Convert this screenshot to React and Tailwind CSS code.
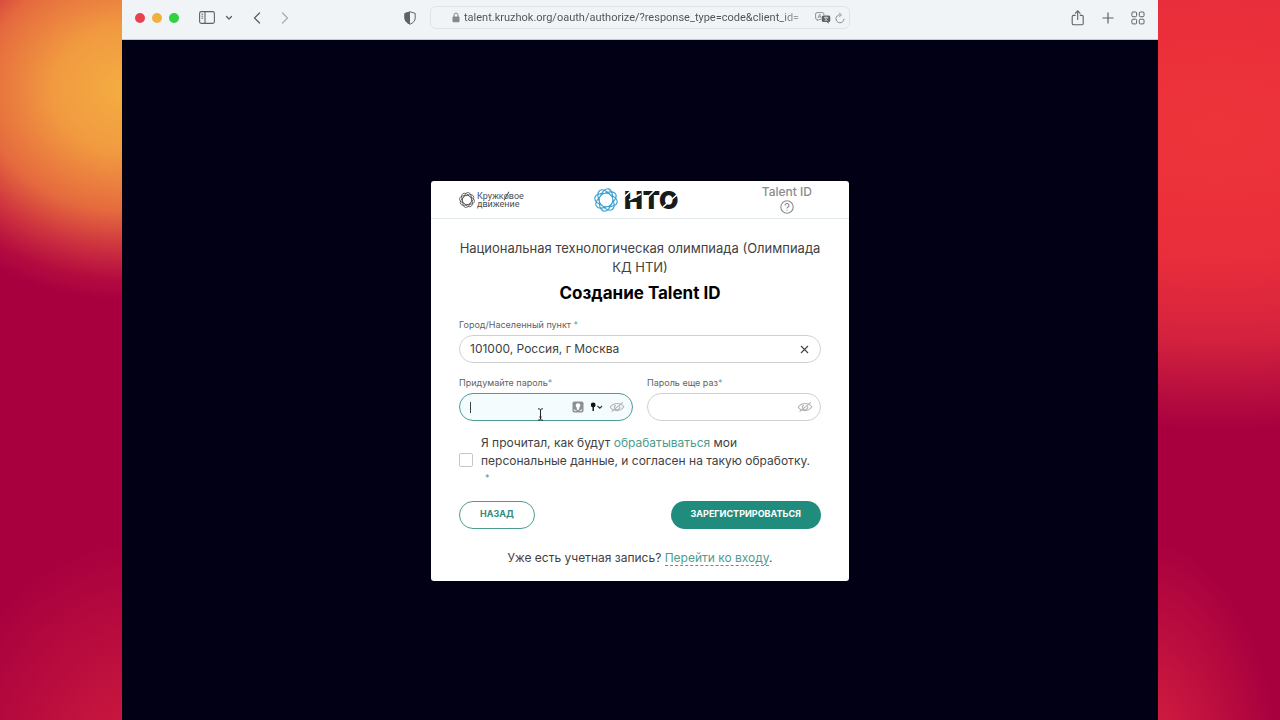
/**
 * Talent ID registration screen
 * Browser window with the "create account" card in the middle
 */

import { useState } from 'react';

const RingLogo = ({ className }) => (
  <svg viewBox="0 0 24 24" fill="none" stroke="currentColor" strokeWidth="1.1" className={className} aria-hidden="true">
    {[0, 45, 90, 135].map((angle) => (
      <ellipse key={angle} cx="12" cy="12" rx="11.4" ry="6.3" transform={`rotate(${angle + 12} 12 12)`} />
    ))}
    {/* clears the crossings inside the ring */}
    <circle cx="12" cy="12" r="6.4" fill="#fff" stroke="none" />
    <circle cx="12" cy="12" r="6.8" strokeWidth="0.7" />
  </svg>
);

const SidebarIcon = () => (
  <svg viewBox="0 0 16 13" fill="none" stroke="currentColor" className="w-4 h-[13px]">
    <rect x="0.6" y="0.6" width="14.8" height="11.8" rx="1.8" strokeWidth="1.1" />
    <path d="M6 0.6v11.8" strokeWidth="1.1" />
    <path d="M2.4 3.2h1.8M2.4 5.2h1.8M2.4 7.2h1.8" strokeWidth="0.9" />
  </svg>
);

const ShieldIcon = () => (
  <svg viewBox="0 0 12 14" className="w-3 h-3.5">
    <path d="M6 0.8 11.2 2.4V7c0 3-2.2 5-5.2 6.2C3 12 0.8 10 0.8 7V2.4Z" fill="none" stroke="currentColor" />
    <path d="M6 0.8V13.2C3 12 0.8 10 0.8 7V2.4Z" fill="currentColor" />
  </svg>
);

const LockIcon = () => (
  <svg viewBox="0 0 8 11" className="w-2 h-[11px] shrink-0">
    <rect x="0.5" y="4.6" width="7" height="5.6" rx="1" fill="currentColor" />
    <path d="M2 5V3a2 2 0 0 1 4 0v2" fill="none" stroke="currentColor" />
  </svg>
);

const TranslateIcon = () => (
  <svg viewBox="0 0 16 12" className="w-4 h-3 shrink-0">
    <path
      d="M6.5 7.4H4L2.4 9V7.4H2A1.4 1.4 0 0 1 .6 6V2A1.4 1.4 0 0 1 2 .6h5.5A1.4 1.4 0 0 1 8.9 2v1"
      fill="none"
      stroke="currentColor"
      strokeWidth="0.9"
    />
    <path d="M3 6 4.7 2.2 6.2 6M3.6 4.8h2.2" fill="none" stroke="currentColor" strokeWidth="0.8" />
    <path
      d="M8.3 3.4h5.5a1.5 1.5 0 0 1 1.5 1.5v3.6A1.5 1.5 0 0 1 13.8 10h-.2v1.7L11.8 10H8.3a1.5 1.5 0 0 1-1.5-1.5V4.9a1.5 1.5 0 0 1 1.5-1.5Z"
      fill="#5d6264"
    />
    <path d="M9 5.4h4.2M11 4.5v.9M9.6 8.8c1.6-.6 2.4-1.6 2.7-3.2M9.8 5.8c.5 1.4 1.4 2.4 2.8 3" fill="none" stroke="#f1f4f6" strokeWidth="0.7" />
  </svg>
);

const ReloadIcon = () => (
  <svg viewBox="0 0 10 12" fill="none" stroke="currentColor" className="w-2.5 h-3 shrink-0">
    <path d="M9 6.8A4 4 0 1 1 5.2 2.8" />
    <path d="M4.2 0.8 6.4 2.8 4.4 4.9" strokeWidth="0.9" />
  </svg>
);

const ShareIcon = () => (
  <svg viewBox="0 0 14 16" fill="none" stroke="currentColor" className="w-3.5 h-4">
    <path d="M4.6 5.4H2.6A1.4 1.4 0 0 0 1.2 6.8v6.6a1.4 1.4 0 0 0 1.4 1.4h8.2a1.4 1.4 0 0 0 1.4-1.4V6.8a1.4 1.4 0 0 0-1.4-1.4h-2" strokeWidth="1.1" />
    <path d="M6.7 10V1.2M4 3.6l2.7-2.7 2.7 2.7" strokeWidth="1.1" />
  </svg>
);

const TilesIcon = () => (
  <svg viewBox="0 0 14 14" fill="none" stroke="currentColor" className="size-3.5">
    <rect x="0.9" y="1" width="4.7" height="4.7" rx="1" />
    <rect x="8.3" y="1" width="4.7" height="4.7" rx="1" />
    <rect x="0.9" y="8.2" width="4.7" height="4.7" rx="1" />
    <rect x="8.3" y="8.2" width="4.7" height="4.7" rx="1" />
  </svg>
);

const Chevron = ({ d, className }) => (
  <svg viewBox="0 0 8 12" fill="none" stroke="currentColor" strokeWidth="1.3" strokeLinecap="round" strokeLinejoin="round" className={className}>
    <path d={d} />
  </svg>
);

const HiddenEyeIcon = () => (
  <svg viewBox="0 0 16 12" fill="none" stroke="currentColor" strokeWidth="1.1" className="w-4 h-3 text-[#b2b5b5]">
    <path d="M1.2 6.3C2.8 3.8 5.2 2.5 8 2.5s5.2 1.1 6.8 3.3C13.2 8.3 10.8 9.6 8 9.6S2.8 8.6 1.2 6.3Z" />
    <path d="M10.5 5.2A2.6 2.6 0 1 1 6.8 3.9" />
    <path d="M2.6 10.6 13.8 1.4" />
  </svg>
);

const PasswordKeyIcon = () => (
  <svg viewBox="0 0 12 12" className="size-3">
    <rect x="0.5" y="0.5" width="11" height="11" rx="1.8" fill="#8b9192" />
    <circle cx="6" cy="4.5" r="2.3" fill="#fff" />
    <path d="M4.8 6h2.4v2.2L6 9.2 4.8 8.2Z" fill="#fff" />
    <path d="M2.4 8.2v1.5h2M9.6 8.2v1.5h-2" fill="none" stroke="#fff" strokeWidth="0.8" />
  </svg>
);

const KeyMenuIcon = () => (
  <svg viewBox="0 0 13 10" className="w-[13px] h-2.5">
    <circle cx="3.2" cy="3" r="2.4" fill="#111" />
    <path d="M3.2 4v5" stroke="#111" strokeWidth="1.4" />
    <path d="m7.5 4 2.3 2.2L12.1 4" fill="none" stroke="#333" strokeWidth="1.1" />
  </svg>
);

const TextCursor = () => (
  <svg viewBox="0 0 7 13" fill="none" stroke="#222" className="w-[7px] h-[13px]">
    <path d="M1 .8c1.4 0 2.5.4 2.5 1.4C3.5 1.2 4.6.8 6 .8M3.5 2v9M1 12.2c1.4 0 2.5-.4 2.5-1.4 0 1 1.1 1.4 2.5 1.4M2.3 9h2.4" />
  </svg>
);

const NtoLogo = () => (
  <svg viewBox="0 0 60 32" className="w-15 h-8" role="img" aria-label="НТО">
    <text x="0" y="25" fontSize="25" fontWeight="900" fill="#171b1c" className="font-[Inter]">
      НТО
    </text>
    {/* diagonal cuts through the letters */}
    <path d="M0 13 9 5M5 16 17 10M20 17 31 6M39 23 55 9" stroke="#fff" strokeWidth="1.6" fill="none" />
  </svg>
);

const Toolbar = () => (
  <header className="grid grid-cols-[1fr_420px_1fr] items-center h-10 pb-1 bg-[#f1f4f6] border-b border-[#c5c9cc] text-[#5d6264]">
    <div className="flex items-center justify-between pl-[13px] pr-3.5">
      <div className="flex items-center">
        <div className="flex gap-[7px]">
          <span className="size-2.5 rounded-full bg-[#e8424f]" />
          <span className="size-2.5 rounded-full bg-[#f0b13a]" />
          <span className="size-2.5 rounded-full bg-[#2fd33f]" />
        </div>
        <button type="button" aria-label="Боковая панель" className="ml-5">
          <SidebarIcon />
        </button>
        <button type="button" aria-label="Меню" className="ml-2.5">
          <Chevron d="M1.5 4.5 4 7 6.5 4.5" className="w-2 h-3" />
        </button>
        <button type="button" aria-label="Назад" className="ml-5">
          <Chevron d="M6.5 1 1.5 6l5 5" className="w-2 h-3" />
        </button>
        <button type="button" aria-label="Вперёд" className="ml-5 text-[#a9adaf]">
          <Chevron d="m1.5 1 5 5-5 5" className="w-2 h-3" />
        </button>
      </div>
      <button type="button" aria-label="Конфиденциальность">
        <ShieldIcon />
      </button>
    </div>

    <div className="flex items-center h-[23px] pl-[21px] pr-1 rounded-md border border-[#dfe3e5] text-[#84898b]">
      <LockIcon />
      <input
        type="text"
        readOnly
        aria-label="Адрес"
        value="talent.kruzhok.org/oauth/authorize/?response_type=code&client_id="
        className="flex-1 min-w-0 ml-1 mr-2 pt-0.5 bg-linear-to-r from-[#4c5153] from-92% to-[#d5d8da] bg-clip-text text-transparent font-[Roboto] text-[11px] outline-none"
      />
      <TranslateIcon />
      <button type="button" aria-label="Обновить" className="ml-1">
        <ReloadIcon />
      </button>
    </div>

    <div className="flex items-center justify-end gap-[17px] pr-[13px]">
      <button type="button" aria-label="Поделиться">
        <ShareIcon />
      </button>
      <button type="button" aria-label="Новая вкладка">
        <svg viewBox="0 0 12 12" stroke="currentColor" strokeWidth="1.2" className="size-3">
          <path d="M6 .5v11M.5 6h11" />
        </svg>
      </button>
      <button type="button" aria-label="Обзор вкладок">
        <TilesIcon />
      </button>
    </div>
  </header>
);

const CardHeader = () => (
  <div className="flex items-center h-[38px] pl-7 pr-[37px] border-b border-[#dfe9e9]">
    <div className="flex items-center gap-0.5 text-[#4a4d4e]">
      <RingLogo className="size-4" />
      <span className="font-[Roboto] text-[9px] leading-2">
        Кружк
        <span className="relative after:absolute after:left-[2px] after:top-0 after:h-2.5 after:w-px after:rotate-30 after:bg-[#4a4d4e]">
          о
        </span>
        вое
        <br />
        движение
      </span>
    </div>
    <div className="flex items-center ml-[70px] gap-1.5">
      <RingLogo className="size-6 text-[#3a9fd0]" />
      <NtoLogo />
    </div>
    <div className="flex flex-col items-center ml-auto text-[#8b8b8b]">
      <span className="text-[12px] leading-3 font-medium">Talent ID</span>
      <button type="button" aria-label="Что такое Talent ID" className="mt-0.5">
        <svg viewBox="0 0 14 14" fill="none" stroke="currentColor" className="size-3.5">
          <circle cx="7" cy="7" r="6.2" strokeWidth="1.1" />
          <path d="M5 5.6a2 2 0 1 1 2.9 1.7c-.6.3-.9.6-.9 1.2M7 9.7v1.1" strokeWidth="1.1" />
        </svg>
      </button>
    </div>
  </div>
);

const Field = ({ id, label, gap, className, children, ...props }) => (
  <div className="flex-1 min-w-0">
    <label htmlFor={id} className="block text-[9px] leading-3 text-[#5f6263]">
      {label}
      {gap && ' '}
      <span className="text-[#6f9f9a]">*</span>
    </label>
    <div className="relative mt-1">
      <input
        id={id}
        className={`block w-full h-7 pl-2.5 pb-0.5 rounded-full border text-[12px] text-[#3f4243] outline-none ${className}`}
        {...props}
      />
      <div className="absolute inset-y-0 right-2 flex items-center gap-1.5">{children}</div>
    </div>
  </div>
);

const RegisterCard = () => {
  const [city, setCity] = useState('101000, Россия, г Москва');
  const [password, setPassword] = useState('');
  const [repeat, setRepeat] = useState('');
  const [agreed, setAgreed] = useState(false);

  return (
    <section className="w-full max-w-[418px] rounded-[3px] bg-white text-[#3f4243]">
      <CardHeader />
      <form onSubmit={(e) => e.preventDefault()} className="px-7 pt-5 pb-3.5">
        <p className="text-center text-[13px] leading-[19px]">
          Национальная технологическая олимпиада (Олимпиада КД НТИ)
        </p>
        <h1 className="mt-1 text-center text-[17px] leading-6 font-bold text-black">Создание Talent ID</h1>

        <div className="flex mt-3.5">
          <Field
            id="city"
            label="Город/Населенный пункт"
            gap
            value={city}
            onChange={(e) => setCity(e.target.value)}
            className="border-[#cfd1d1] pr-8"
          >
            <button type="button" aria-label="Очистить" onClick={() => setCity('')} className="mr-1">
              <svg viewBox="0 0 9 9" stroke="#3f4243" strokeWidth="1.1" className="size-[9px]">
                <path d="m1 1 7 7M8 1 1 8" />
              </svg>
            </button>
          </Field>
        </div>

        <div className="flex gap-3.5 mt-3.5">
          <Field
            id="password"
            type="password"
            label="Придумайте пароль"
            value={password}
            onChange={(e) => setPassword(e.target.value)}
            className="border-[#4d9c95] bg-[#f5fcfd] pr-16"
          >
            <PasswordKeyIcon />
            <KeyMenuIcon />
            <button type="button" aria-label="Показать пароль">
              <HiddenEyeIcon />
            </button>
          </Field>
          <Field
            id="repeat"
            type="password"
            label="Пароль еще раз"
            value={repeat}
            onChange={(e) => setRepeat(e.target.value)}
            className="border-[#cfd1d1] pr-8"
          >
            <button type="button" aria-label="Показать пароль">
              <HiddenEyeIcon />
            </button>
          </Field>
        </div>

        <div className="flex items-center gap-2 mt-[13px]">
          <input
            id="agree"
            type="checkbox"
            checked={agreed}
            onChange={(e) => setAgreed(e.target.checked)}
            className="size-3.5 shrink-0 appearance-none rounded-xs border border-[#c4c7c7] bg-white checked:bg-[#1f8c7d]"
          />
          <label htmlFor="agree" className="text-[12px] leading-[18px]">
            Я прочитал, как будут{' '}
            <a href="#policy" className="text-[#4d9c8f]">
              обрабатываться
            </a>{' '}
            мои
            <br />
            персональные данные, и согласен на такую обработку.
            <span className="block pl-1 text-[9px] leading-4 text-[#4d9c8f]">*</span>
          </label>
        </div>

        <div className="flex justify-between mt-[15px]">
          <button type="button" className="h-7 px-5 pb-0.5 rounded-full border border-[#4d9c8f] text-[9px] font-bold text-[#2f8c7e]">
            НАЗАД
          </button>
          <button type="submit" className="h-7 px-5 pb-0.5 rounded-full bg-[#1f8c7d] text-[9px] font-bold text-white">
            ЗАРЕГИСТРИРОВАТЬСЯ
          </button>
        </div>

        <p className="mt-5 text-center text-[12px] leading-[18px]">
          Уже есть учетная запись?{' '}
          <a href="#login" className="border-b border-dashed border-[#4d9c8f] text-[#4d9c8f]">
            Перейти ко входу
          </a>
          .
        </p>
      </form>
    </section>
  );
};

const App = () => (
  <div className="relative flex min-h-screen px-[122px] font-[Inter,sans-serif] bg-[#a8003f] bg-[radial-gradient(250px_210px_at_10%_12.5%,#f4ae40,#f19a40_30%,#e56a3e_58%,#cc303f_76%,#b40c3f_90%,#a8003f00),radial-gradient(580px_300px_at_95%_18%,#ee343a,#e92e3b_42%,#d4223e_70%,#b40c3f_90%,#a8003f00),radial-gradient(220px_240px_at_12%_108%,#d4203e,#a8003f00),radial-gradient(140px_240px_at_89%_108%,#dc243e,#a8003f00)]">
    <div className="flex flex-col flex-1 min-w-0 bg-[#010014]">
      <Toolbar />
      <main className="flex flex-1 items-center justify-center pt-0.5">
        <RegisterCard />
      </main>
    </div>

    {/* text caret and pointer, drawn over the window */}
    <span className="absolute left-[470px] top-[402px] w-px h-[11px] bg-[#3f4243]" />
    <span className="absolute left-[537px] top-[408px]">
      <TextCursor />
    </span>
  </div>
);

export default App;
